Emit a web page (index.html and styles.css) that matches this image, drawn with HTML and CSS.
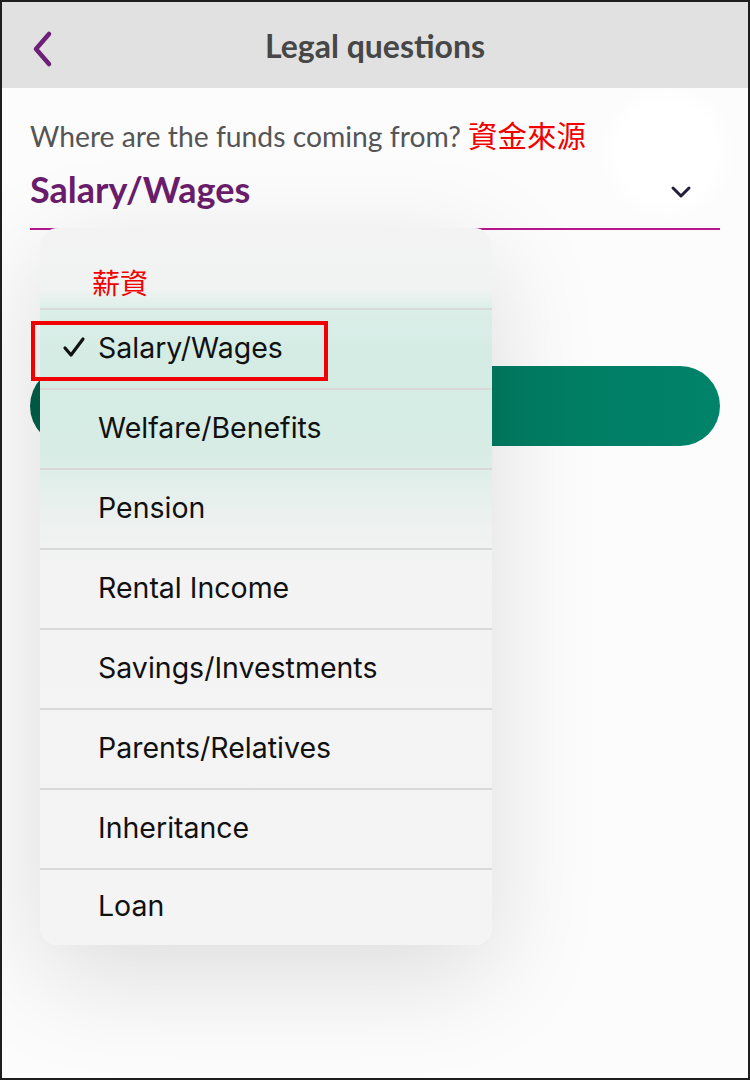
FILE: index.html
```html
<!DOCTYPE html>
<html lang="en">
<head>
<meta charset="UTF-8">
<meta name="viewport" content="width=device-width, initial-scale=1.0">
<title>Legal questions</title>
<link rel="stylesheet" href="styles.css">
</head>
<body>

<div class="screen">
  <header class="topbar">
    <svg class="back" width="24" height="38" viewBox="0 0 24 38">
      <path d="M19 4 L6 19 L19 34" fill="none" stroke="#6d2077" stroke-width="4.5" stroke-linecap="round" stroke-linejoin="round"/>
    </svg>
    <h1>Legal questions</h1>
  </header>

  <main class="content">
    <div class="field">
      <label class="question">Where are the funds coming from? <span class="note">資金來源</span></label>
      <div class="select">
        <span class="value">Salary/Wages</span>
        <svg class="caret" width="22" height="14" viewBox="0 0 22 14">
          <path d="M3 3 L11 11 L19 3" fill="none" stroke="#221d3a" stroke-width="3" stroke-linecap="round" stroke-linejoin="round"/>
        </svg>
      </div>
    </div>

    <button class="next" type="button"></button>
  </main>

  <div class="picker">
    <div class="picker-head">薪資</div>
    <ul class="options">
      <li class="option selected">
        <svg class="tick" width="24" height="22" viewBox="0 0 24 22">
          <path d="M3 12 L9 19 L21 3" fill="none" stroke="#111" stroke-width="3.2" stroke-linecap="round" stroke-linejoin="round"/>
        </svg>
        Salary/Wages<span class="mark"></span>
      </li>
      <li class="option">Welfare/Benefits</li>
      <li class="option">Pension</li>
      <li class="option">Rental Income</li>
      <li class="option">Savings/Investments</li>
      <li class="option">Parents/Relatives</li>
      <li class="option">Inheritance</li>
      <li class="option">Loan</li>
    </ul>
  </div>
</div>

</body>
</html>
```

FILE: styles.css
```css
body {
  margin: 0;
  padding: 0;
  background: #fff;
}
.screen {
  position: relative;
  width: 750px;
  height: 1080px;
  box-sizing: border-box;
  border: 2px solid #1e1e1e;
  overflow: hidden;
  background: radial-gradient(circle at 665px 150px, #fff 50px, rgba(255,255,255,0) 70px), #fcfcfc;
  font-family: Lato, "Noto Sans CJK TC", sans-serif;
}
.topbar {
  height: 86px;
  background: #e1e1e1;
  display: flex;
  align-items: center;
  justify-content: center;
  position: relative;
}
.topbar h1 {
  margin: 0;
  font-size: 32px;
  font-weight: 700;
  color: #474747;
}
.back {
  position: absolute;
  left: 28px;
  top: 28px;
}
.content {
  padding: 28px 28px 0;
}
.question {
  display: block;
  height: 36px;
  font-size: 28.3px;
  line-height: 36px;
  color: #555;
}
.note {
  color: #f20000;
  font-family: "Noto Sans CJK TC", sans-serif;
  font-size: 29.5px;
}
.select {
  display: flex;
  align-items: center;
  justify-content: space-between;
  height: 76px;
  padding-right: 28px;
  border-bottom: 2px solid #b8168f;
}
.value {
  font-size: 36px;
  font-weight: 700;
  color: #6a1d6c;
  padding-bottom: 3px;
}
.caret {
  margin-top: 4px;
}
.next {
  display: block;
  width: 100%;
  height: 80px;
  margin-top: 136px;
  border: none;
  border-radius: 40px;
  background: linear-gradient(90deg, #005e48, #007a5f 60%, #00836a);
}

/* drop-down list laid over the form */
.picker {
  position: absolute;
  left: 38px;
  top: 226px;
  width: 452px;
  border-radius: 18px;
  background: linear-gradient(180deg, #f3f3f3 0, #f1f3f2 60px, #dcefe9 80px, #d5ece5 120px, #d6ece5 220px, #e4efeb 260px, #f0f2f1 310px, #f3f3f3 340px, #f4f4f4 100%);
  box-shadow: 0 30px 110px rgba(0, 0, 0, 0.13);
}
.picker-head {
  height: 80px;
  box-sizing: border-box;
  padding: 40px 0 0 52px;
  font-family: "Noto Sans CJK TC", sans-serif;
  font-size: 28px;
  line-height: 1;
  color: #f20000;
}
.options {
  list-style: none;
  margin: 0;
  padding: 0;
}
.option {
  position: relative;
  height: 80px;
  box-sizing: border-box;
  border-top: 2px solid #d9d9d9;
  padding: 0 0 4px 58px;
  display: flex;
  align-items: center;
  font-family: Inter, "Liberation Sans", sans-serif;
  font-size: 28.5px;
  color: #111;
}
.option:last-child {
  height: 77px;
}
.tick {
  position: absolute;
  left: 22px;
  top: 26px;
}
.mark {
  position: absolute;
  left: -9px;
  top: 11px;
  width: 289px;
  height: 52px;
  border: 4px solid #f20000;
}
```
